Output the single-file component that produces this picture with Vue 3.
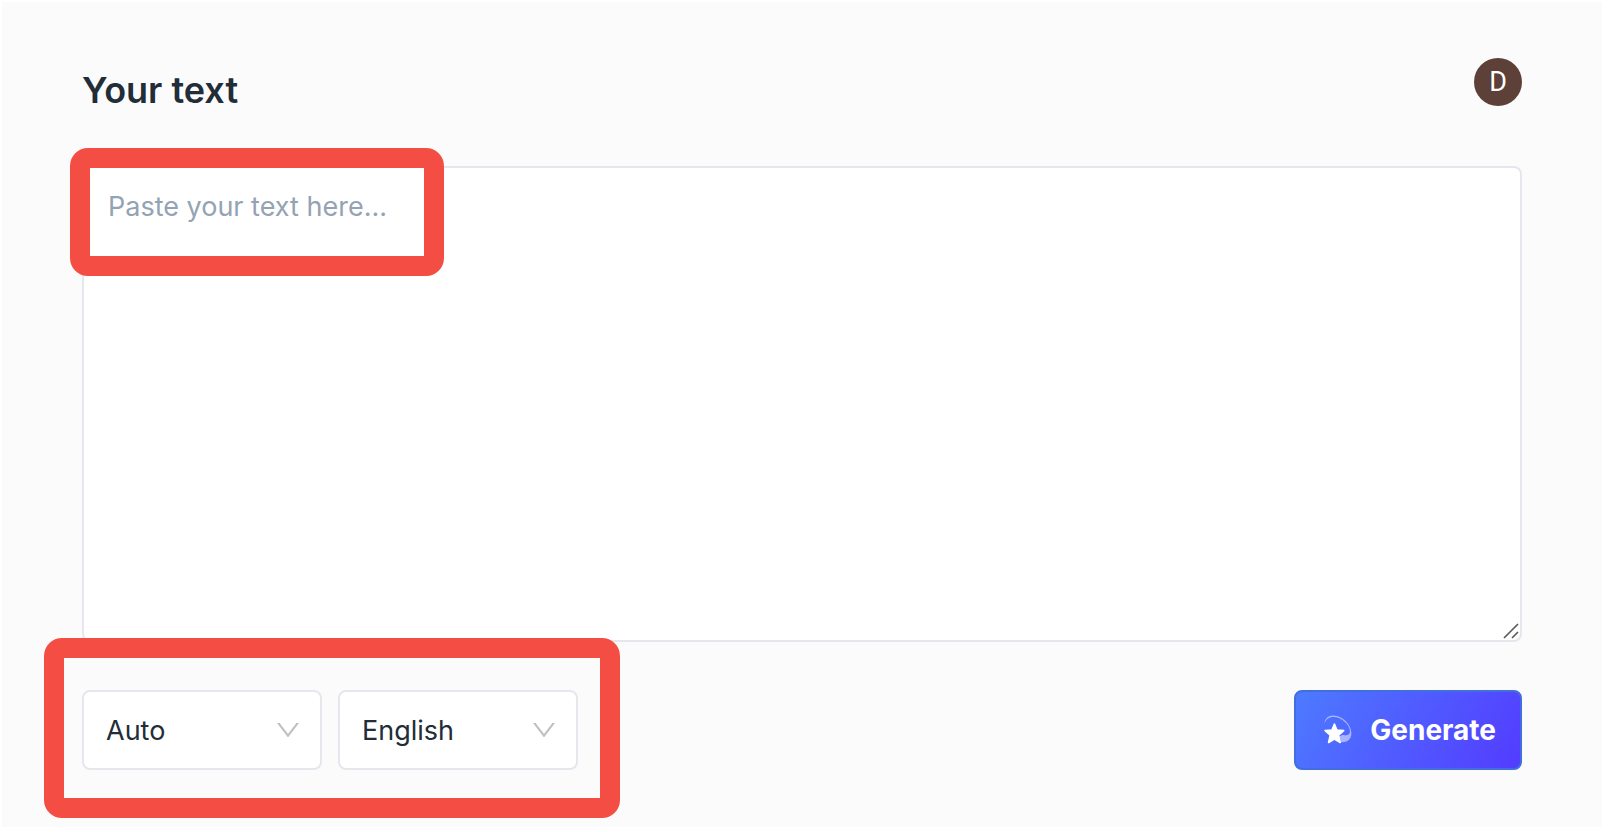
<script setup>
import { ref } from 'vue'

const text = ref('')
const tone = ref('Auto')
const language = ref('English')
const tones = ['Auto', 'Formal', 'Casual']
const languages = ['English', 'French', 'German', 'Spanish']
</script>

<template>
  <div class="frame">
    <main class="page">
      <header class="header">
        <h1 class="title"><label for="source-text">Your text</label></h1>
        <button class="avatar" type="button" aria-label="Account">D</button>
      </header>

      <section class="editor">
        <textarea id="source-text" v-model="text" class="textarea" placeholder="Paste your text here..."></textarea>
        <svg class="grip" viewBox="0 0 16 16" aria-hidden="true">
          <path d="M1 15 15 1M9 15l6-6" fill="none" stroke="#59595c" stroke-width="1.6" />
        </svg>
        <div class="highlight highlight-text"></div>
      </section>

      <footer class="toolbar">
        <div class="options">
          <div class="field">
            <select v-model="tone" class="select" aria-label="Tone">
              <option v-for="item in tones" :key="item">{{ item }}</option>
            </select>
            <svg class="chevron" viewBox="0 0 22 14" aria-hidden="true">
              <path d="M0 0h2.6L11 11 19.4 0H22L11 14.4z" fill="#bfbfbf" />
            </svg>
          </div>
          <div class="field">
            <select v-model="language" class="select" aria-label="Language">
              <option v-for="item in languages" :key="item">{{ item }}</option>
            </select>
            <svg class="chevron" viewBox="0 0 22 14" aria-hidden="true">
              <path d="M0 0h2.6L11 11 19.4 0H22L11 14.4z" fill="#bfbfbf" />
            </svg>
          </div>
          <div class="highlight highlight-options"></div>
        </div>

        <button class="generate" type="button">
          <svg class="star" viewBox="0 0 28 30" aria-hidden="true">
            <path d="M.4 8.500C1 3 4.500.3 9.500.4 18.500.6 27.500 9.500 27.400 18.500c-.1 5.800-4.400 9.200-10.400 8.700l-1.500-6 3.500-1.500c4 1.500 7-.2 7-3.500C25.700 9.800 17.500 2.200 9.500 2.100 5 2 2.200 4.200.4 8.500z" fill="#fff" fill-opacity=".5" />
            <path d="M10.400 9 12.900 15 19.700 15.600 14.600 20.200 16.200 27.500 10.400 24 4.600 27.500 6.200 20.200 1.100 15.600 7.900 15z" fill="#fff" stroke="#fff" stroke-width="1.600" stroke-linejoin="round" />
          </svg>
          <span>Generate</span>
        </button>
      </footer>
    </main>
  </div>
</template>

<style>
body {
  background: #fff;
}
</style>

<style scoped>
.frame {
  box-sizing: border-box;
  min-height: 100vh;
  padding: 2px 6px 5px 2px;
  display: flex;
  font-family: Inter, "Liberation Sans", sans-serif;
  color: #222d38;
}

.page {
  box-sizing: border-box;
  flex: 1;
  display: flex;
  flex-direction: column;
  padding: 56px 80px 57px;
  background: #fbfbfb;
}

.header {
  display: flex;
  justify-content: space-between;
  align-items: flex-start;
  margin-bottom: 48px;
}

.title {
  margin: 0;
  padding-top: 4px;
  font-size: 36px;
  line-height: 56px;
  font-weight: 600;
}

.avatar {
  width: 48px;
  height: 48px;
  padding: 0;
  border: 0;
  border-radius: 50%;
  background: #5d4037;
  color: #fff;
  font-family: Roboto, sans-serif;
  font-size: 27px;
  line-height: 48px;
}

.editor {
  position: relative;
  flex: 1;
  display: flex;
  margin-bottom: 48px;
}

.textarea {
  box-sizing: border-box;
  flex: 1;
  min-width: 0;
  padding: 16px 24px;
  border: 2px solid #e6e7ec;
  border-radius: 8px;
  background: #fff;
  color: inherit;
  font-family: inherit;
  font-size: 27px;
  line-height: 46px;
  resize: none;
  outline: none;
}

.textarea::placeholder {
  color: #94a3b3;
  opacity: 1;
}

.grip {
  position: absolute;
  right: 3px;
  bottom: 3px;
  width: 16px;
  height: 16px;
}

.highlight {
  position: absolute;
  box-sizing: border-box;
  border: 20px solid #f44e44;
  border-radius: 18px;
  pointer-events: none;
}

.highlight-text {
  top: -18px;
  left: -12px;
  width: 374px;
  height: 128px;
}

.highlight-options {
  inset: -52px -42px -48px -38px;
}

.toolbar {
  display: flex;
  justify-content: space-between;
}

.options {
  position: relative;
  display: flex;
  gap: 16px;
}

.field {
  position: relative;
  width: 240px;
}

.select {
  appearance: none;
  box-sizing: border-box;
  width: 100%;
  height: 80px;
  padding: 0 56px 0 22px;
  border: 2px solid #e6e7ec;
  border-radius: 8px;
  background: #fff;
  color: inherit;
  font-family: inherit;
  font-size: 27px;
}

.chevron {
  position: absolute;
  top: 33px;
  right: 23px;
  width: 22px;
  height: 14px;
  pointer-events: none;
}

.generate {
  box-sizing: border-box;
  display: flex;
  align-items: center;
  gap: 18px;
  height: 80px;
  padding: 0 24px 0 28px;
  border: 2px solid #416fdf;
  border-radius: 8px;
  background: linear-gradient(120deg, #4d7bff, #533bff) border-box;
  color: #fff;
  font-family: inherit;
  font-size: 28px;
  font-weight: 700;
}

.star {
  width: 28px;
  height: 30px;
}
</style>
